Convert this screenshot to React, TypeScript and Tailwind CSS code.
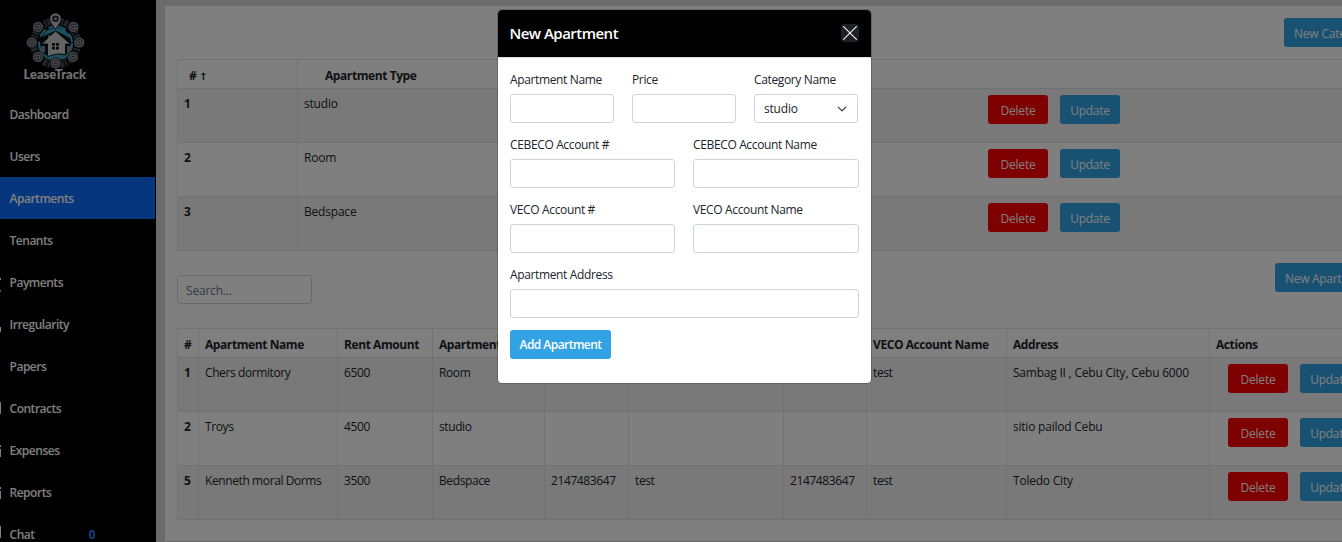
import type { ReactNode } from "react";

const navItems: { label: string; active?: boolean; badge?: string; sliver?: [number, number][] }[] = [
  { label: "Dashboard" },
  { label: "Users" },
  { label: "Apartments", active: true },
  { label: "Tenants" },
  { label: "Payments", sliver: [[17, 2], [29, 1.5]] },
  { label: "Irregularity", sliver: [[24, 5]] },
  { label: "Papers" },
  { label: "Contracts", sliver: [[15, 12]] },
  { label: "Expenses", sliver: [[16, 2], [20, 8]] },
  { label: "Reports", sliver: [[16, 2], [20, 8]] },
  { label: "Chat", badge: "0", sliver: [[13, 12]] },
];

const types = [
  ["1", "studio"],
  ["2", "Room"],
  ["3", "Bedspace"],
];

const apartmentHeads = [
  "#",
  "Apartment Name",
  "Rent Amount",
  "Apartment",
  "",
  "",
  "",
  "VECO Account Name",
  "Address",
  "Actions",
];

const apartments = [
  ["1", "Chers dormitory", "6500", "Room", "", "", "", "test", "Sambag II , Cebu City, Cebu 6000"],
  ["2", "Troys", "4500", "studio", "", "", "", "", "sitio pailod Cebu"],
  ["5", "Kenneth moral Dorms", "3500", "Bedspace", "2147483647", "test", "2147483647", "test", "Toledo City"],
];

const nodes: [number, number][] = [
  [18, 17],
  [53.5, 17],
  [11.8, 32.5],
  [59.2, 32.5],
  [18, 47],
  [53, 47],
  [35.5, 53],
];

function Logo() {
  return (
    <svg width="71" height="60" viewBox="0 0 71 60" fill="none" className="shrink-0">
      <circle cx="35.5" cy="33" r="22.5" stroke="#424a52" strokeWidth="6" strokeDasharray="4 1.6 2 1.2" />
      <circle cx="35.5" cy="33" r="19" stroke="#6c7479" strokeWidth="0.6" />
      <circle cx="35.5" cy="33" r="16.5" fill="#081218" stroke="#3a9fc0" strokeWidth="2.2" strokeDasharray="18 5 9 3" />
      <path d="M22 27Q27 17 37 18Q47 18 50 28L35.5 20.5Z" fill="#3a9fc0" />
      <path d="M24 46Q35 42 48 46Q43 51 35 49.5Q28 51 24 46Z" fill="#3a9fc0" />
      <path d="M21 36h4v6h-4zM47 36h4v6h-4z" fill="#78828a" />
      <path
        d="M35.5 21L50.5 34H45.5V44.5Q37 42.5 27.5 46.5V34H21.5L28 28V25H30.5V25.6Z"
        fill="#c8c8c8"
        stroke="#000"
        strokeWidth="0.8"
      />
      <path d="M32 33h3v2.8h-3zM36 33h3v2.8h-3zM32 36.8h3v2.8h-3zM36 36.8h3v2.8h-3z" fill="#101820" />
      {nodes.map(([x, y]) => (
        <g key={x + "-" + y}>
          <circle cx={x} cy={y} r="5.4" fill="#9a9ea2" stroke="#000" strokeWidth="0.8" />
          <circle cx={x} cy={y} r="3.7" fill="#454d55" />
          <path d={`M${x - 1.8} ${y - 1.5}h3.6v3h-3.6z`} stroke="#a4a8ac" strokeWidth="0.9" />
        </g>
      ))}
      <path
        d="M35.5 19.5C32 14 29.7 11.8 29.7 8.8A5.8 5.8 0 0 1 41.3 8.8C41.3 11.8 39 14 35.5 19.5Z"
        fill="#c2c4c6"
        stroke="#000"
        strokeWidth="0.7"
      />
      <circle cx="35.5" cy="8.8" r="3.3" fill="#20282e" />
      <circle cx="35.5" cy="8.8" r="1.4" fill="#b0b4b8" />
    </svg>
  );
}

function Sidebar() {
  return (
    <aside className="flex w-[156px] shrink-0 flex-col bg-black font-semibold tracking-[-0.48px] text-white">
      <div className="flex h-[93px] shrink-0 flex-col pl-5 pt-[10px]">
        <Logo />
        <div className="-mt-[4px] pl-[3.5px] font-['Lato'] text-[13px] font-black leading-[16px] tracking-[-0.03px] text-[#e0e0e0]">
          LeaseTrack
        </div>
      </div>
      <nav className="flex flex-col">
        {navItems.map((item) => (
          <a
            key={item.label}
            className={
              item.active
                ? "mr-px flex h-[42px] shrink-0 items-center bg-[#0d6efd]"
                : "mr-px flex h-[42px] shrink-0 items-center"
            }
          >
            <svg width="9.5" height="42" className="shrink-0">
              {item.sliver?.map(([y, h]) => <rect key={y} x="0" y={y} width="1" height={h} fill="#fff" />)}
            </svg>
            <span className="pt-[2px]">{item.label}</span>
            {item.badge && <span className="ml-[54px] pt-[2px] font-bold text-[#2f7dff]">{item.badge}</span>}
          </a>
        ))}
      </nav>
    </aside>
  );
}

function Actions() {
  return (
    <div className="flex gap-3 pl-3">
      <button className="h-[29px] w-[60px] rounded-[3px] bg-[#ff0000] pt-[2px] tracking-[-0.2px] text-white">Delete</button>
      <button className="h-[29px] w-[60px] rounded-[3px] bg-[#31a2e4] pt-[2px] tracking-[-0.3px] text-white">Update</button>
    </div>
  );
}

function Th({ children, className = "pl-1.5" }: { children?: ReactNode; className?: string }) {
  return (
    <th
      className={`h-[29px] overflow-hidden whitespace-nowrap border-b border-r border-[#dee2e6] pt-[3px] text-left align-middle font-bold tracking-[-0.42px] ${className}`}
    >
      {children}
    </th>
  );
}

function Td({ children, bold }: { children?: ReactNode; bold?: boolean }) {
  return (
    <td
      className={`h-[54px] whitespace-nowrap border-b border-r border-[#dee2e6] pl-1.5 pt-1.5 align-top leading-[18px] ${bold ? "font-bold" : ""}`}
    >
      {children}
    </td>
  );
}

function Field({ label, className = "flex-1", children }: { label: string; className?: string; children?: ReactNode }) {
  return (
    <label className={`flex flex-col gap-[5px] ${className}`}>
      <span className="h-[18px] leading-[18px]">{label}</span>
      {children ?? <input className="h-[29px] w-full rounded-[3px] border border-[#ced4da] bg-white" />}
    </label>
  );
}

function Modal() {
  return (
    <div
      role="dialog"
      className="absolute left-[498px] top-[10px] h-[373px] w-[373px] overflow-hidden rounded-[4px] bg-white tracking-[-0.36px] text-[#212529] shadow-[0_0_0_1px_rgba(0,0,0,0.18)]"
    >
      <div className="flex h-[47px] items-center justify-between bg-black pl-[11.5px] pr-3">
        <h5 className="text-[15px] font-semibold tracking-[-0.52px] text-white">New Apartment</h5>
        <button className="flex h-[18px] w-[18px] -translate-y-px items-center justify-center rounded-[3px] bg-[#1b2226]">
          <svg width="18" height="18" viewBox="0 0 18 18" stroke="#f4e6de" strokeWidth="1.2" strokeLinecap="round">
            <path d="M2.6 2.6L15.4 15.4M15.4 2.6L2.6 15.4" />
          </svg>
        </button>
      </div>
      <div className="flex flex-col gap-[13px] border-t border-[#dee2e6] pl-3 pr-3 pt-[13px]">
        <div className="flex gap-[18px] pr-px">
          <Field label="Apartment Name" />
          <Field label="Price" />
          <Field label="Category Name">
            <span className="flex h-[29px] items-center justify-between rounded-[3px] border border-[#ced4da] pl-[9px] pr-[10px] tracking-[-0.2px]">
              studio
              <svg width="10" height="10" viewBox="0 0 16 16" fill="none" stroke="#343a40" strokeWidth="2" strokeLinecap="round" strokeLinejoin="round">
                <path d="M2 5l6 6 6-6" />
              </svg>
            </span>
          </Field>
        </div>
        <div className="flex gap-[18px]">
          <Field label="CEBECO Account #" className="w-[165px]" />
          <Field label="CEBECO Account Name" />
        </div>
        <div className="flex gap-[18px]">
          <Field label="VECO Account #" className="w-[165px]" />
          <Field label="VECO Account Name" />
        </div>
        <Field label="Apartment Address" className="w-full" />
        <button className="-mt-px h-[29px] w-[101px] rounded-[3px] bg-[#31a2e4] pt-px font-semibold tracking-[-0.55px] text-white">
          Add Apartment
        </button>
      </div>
    </div>
  );
}

const tableClass = "w-[1201px] table-fixed border-separate border-spacing-0 border-l border-t border-[#dee2e6]";

export default function App() {
  return (
    <div className="relative flex h-[542px] w-[1342px] overflow-hidden bg-[#d6d6d6] font-['Open_Sans',sans-serif] text-[12px] tracking-[-0.4px] text-[#212529]">
      <Sidebar />
      <main className="ml-[9px] mt-[6px] h-[535px] w-[1226px] shrink-0 bg-white pl-3 pt-3">
        <div className="flex h-[41px] w-[1201px] items-start justify-end">
          <button className="h-[29px] w-[94px] rounded-[3px] bg-[#31a2e4] pl-[10px] pt-[2px] text-left tracking-[-0.2px] text-white">
            New Category
          </button>
        </div>
        <table className={tableClass}>
          <colgroup>
            <col className="w-[120px]" />
            <col className="w-[400px]" />
            <col />
          </colgroup>
          <thead>
            <tr>
              <Th className="pl-[11px]">
                # <span className="font-['DejaVu_Sans'] text-[10px]">↑</span>
              </Th>
              <Th className="pl-[27px]">Apartment Type</Th>
              <Th />
            </tr>
          </thead>
          <tbody>
            {types.map(([id, name]) => (
              <tr key={id} className="odd:bg-[#f2f2f2]">
                <Td bold>{id}</Td>
                <Td>
                  <span className="tracking-[-0.2px]">{name}</span>
                </Td>
                <Td>
                  <div className="pl-[272px]">
                    <Actions />
                  </div>
                </Td>
              </tr>
            ))}
          </tbody>
        </table>
        <div className="flex h-[77px] w-[1201px] items-start justify-between pt-3">
          <input
            placeholder="Search..."
            className="mt-3 h-[29px] w-[135px] rounded-[3px] border border-[#ced4da] px-2 pt-[2px] tracking-[-0.2px] placeholder:text-[#6c757d]"
          />
          <button className="h-[29px] w-[103px] rounded-[3px] bg-[#31a2e4] pl-[10px] pt-[2px] text-left tracking-[-0.3px] text-white">
            New Apartment
          </button>
        </div>
        <table className={tableClass}>
          <colgroup>
            <col className="w-[21px]" />
            <col className="w-[139px]" />
            <col className="w-[95px]" />
            <col className="w-[112px]" />
            <col className="w-[84px]" />
            <col className="w-[155px]" />
            <col className="w-[83px]" />
            <col className="w-[140px]" />
            <col className="w-[203px]" />
            <col />
          </colgroup>
          <thead>
            <tr>
              {apartmentHeads.map((h, i) => (
                <Th key={i}>{h}</Th>
              ))}
            </tr>
          </thead>
          <tbody>
            {apartments.map((row) => (
              <tr key={row[0]} className="odd:bg-[#f2f2f2]">
                {row.map((cell, i) => (
                  <Td key={i} bold={i === 0}>
                    <span className={i === 8 ? "tracking-[-0.22px]" : ""}>{cell}</span>
                  </Td>
                ))}
                <Td>
                  <Actions />
                </Td>
              </tr>
            ))}
          </tbody>
        </table>
      </main>
      <div className="absolute inset-0 bg-black/50" />
      <Modal />
    </div>
  );
}
